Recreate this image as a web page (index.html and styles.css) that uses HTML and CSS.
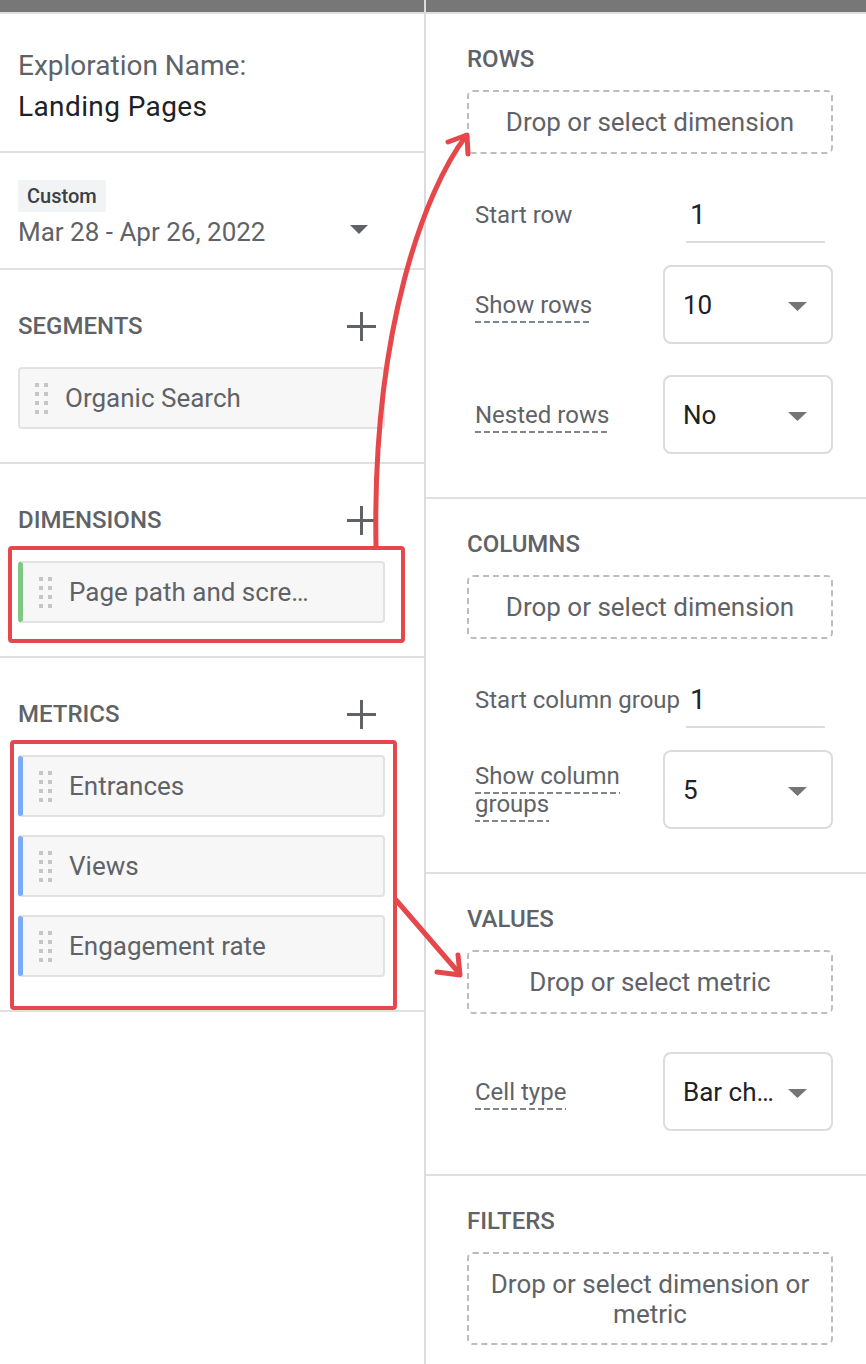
FILE: index.html
```html
<!DOCTYPE html>
<html lang="en">
<head>
<meta charset="utf-8">
<title>Exploration - Landing Pages</title>
<link rel="stylesheet" href="styles.css">
</head>
<body>
<div class="app">
  <aside class="panel left">
    <div class="topbar"></div>
    <section class="sec name">
      <div class="name-label">Exploration Name:</div>
      <div class="name-value">Landing Pages</div>
    </section>
    <section class="sec date">
      <span class="chip-custom">Custom</span>
      <div class="date-row">
        <span class="date-text">Mar 28 - Apr 26, 2022</span>
        <svg class="caret" width="18" height="9" viewBox="0 0 18 9"><path d="M0 0H18L9 9Z" fill="#5f6368"/></svg>
      </div>
    </section>
    <section class="sec list">
      <div class="sec-head">
        <h2>SEGMENTS</h2>
        <svg class="plus" width="29" height="29" viewBox="0 0 29 29"><path d="M14.5 0V29M0 14.5H29" stroke="#5f6368" stroke-width="3"/></svg>
      </div>
      <div class="chips">
        <div class="chip">
          <svg class="dots" width="13" height="31" viewBox="0 0 13 31"><g fill="#c6c6c6"><rect x="0" y="0" width="4" height="4"/><rect x="9" y="0" width="4" height="4"/><rect x="0" y="9" width="4" height="4"/><rect x="9" y="9" width="4" height="4"/><rect x="0" y="18" width="4" height="4"/><rect x="9" y="18" width="4" height="4"/><rect x="0" y="27" width="4" height="4"/><rect x="9" y="27" width="4" height="4"/></g></svg>
          <span class="chip-text">Organic Search</span>
        </div>
      </div>
    </section>
    <section class="sec list">
      <div class="sec-head">
        <h2>DIMENSIONS</h2>
        <svg class="plus" width="29" height="29" viewBox="0 0 29 29"><path d="M14.5 0V29M0 14.5H29" stroke="#5f6368" stroke-width="3"/></svg>
      </div>
      <div class="chips">
        <div class="chip dim">
          <svg class="dots" width="13" height="31" viewBox="0 0 13 31"><g fill="#c6c6c6"><rect x="0" y="0" width="4" height="4"/><rect x="9" y="0" width="4" height="4"/><rect x="0" y="9" width="4" height="4"/><rect x="9" y="9" width="4" height="4"/><rect x="0" y="18" width="4" height="4"/><rect x="9" y="18" width="4" height="4"/><rect x="0" y="27" width="4" height="4"/><rect x="9" y="27" width="4" height="4"/></g></svg>
          <span class="chip-text">Page path and scre…</span>
        </div>
      </div>
    </section>
    <section class="sec list">
      <div class="sec-head">
        <h2>METRICS</h2>
        <svg class="plus" width="29" height="29" viewBox="0 0 29 29"><path d="M14.5 0V29M0 14.5H29" stroke="#5f6368" stroke-width="3"/></svg>
      </div>
      <div class="chips">
        <div class="chip met">
          <svg class="dots" width="13" height="31" viewBox="0 0 13 31"><g fill="#c6c6c6"><rect x="0" y="0" width="4" height="4"/><rect x="9" y="0" width="4" height="4"/><rect x="0" y="9" width="4" height="4"/><rect x="9" y="9" width="4" height="4"/><rect x="0" y="18" width="4" height="4"/><rect x="9" y="18" width="4" height="4"/><rect x="0" y="27" width="4" height="4"/><rect x="9" y="27" width="4" height="4"/></g></svg>
          <span class="chip-text">Entrances</span>
        </div>
        <div class="chip met">
          <svg class="dots" width="13" height="31" viewBox="0 0 13 31"><g fill="#c6c6c6"><rect x="0" y="0" width="4" height="4"/><rect x="9" y="0" width="4" height="4"/><rect x="0" y="9" width="4" height="4"/><rect x="9" y="9" width="4" height="4"/><rect x="0" y="18" width="4" height="4"/><rect x="9" y="18" width="4" height="4"/><rect x="0" y="27" width="4" height="4"/><rect x="9" y="27" width="4" height="4"/></g></svg>
          <span class="chip-text">Views</span>
        </div>
        <div class="chip met">
          <svg class="dots" width="13" height="31" viewBox="0 0 13 31"><g fill="#c6c6c6"><rect x="0" y="0" width="4" height="4"/><rect x="9" y="0" width="4" height="4"/><rect x="0" y="9" width="4" height="4"/><rect x="9" y="9" width="4" height="4"/><rect x="0" y="18" width="4" height="4"/><rect x="9" y="18" width="4" height="4"/><rect x="0" y="27" width="4" height="4"/><rect x="9" y="27" width="4" height="4"/></g></svg>
          <span class="chip-text">Engagement rate</span>
        </div>
      </div>
    </section>
  </aside>

  <main class="panel right">
    <div class="topbar"></div>
    <section class="rsec">
      <h2>ROWS</h2>
      <div class="drop">Drop or select dimension</div>
      <div class="frow first">
        <span class="flabel">Start row</span>
        <div class="input">1</div>
      </div>
      <div class="frow sel">
        <span class="flabel"><span class="dash">Show rows</span></span>
        <div class="select"><span class="val">10</span><svg class="scaret" width="19" height="9" viewBox="0 0 19 9"><path d="M0 0H19L9.5 9Z" fill="#757575"/></svg></div>
      </div>
      <div class="frow sel sel2">
        <span class="flabel"><span class="dash">Nested rows</span></span>
        <div class="select"><span class="val">No</span><svg class="scaret" width="19" height="9" viewBox="0 0 19 9"><path d="M0 0H19L9.5 9Z" fill="#757575"/></svg></div>
      </div>
    </section>
    <section class="rsec">
      <h2>COLUMNS</h2>
      <div class="drop">Drop or select dimension</div>
      <div class="frow first">
        <span class="flabel nowrap">Start column group</span>
        <div class="input">1</div>
      </div>
      <div class="frow sel">
        <span class="flabel"><span class="dash">Show column groups</span></span>
        <div class="select"><span class="val">5</span><svg class="scaret" width="19" height="9" viewBox="0 0 19 9"><path d="M0 0H19L9.5 9Z" fill="#757575"/></svg></div>
      </div>
    </section>
    <section class="rsec">
      <h2>VALUES</h2>
      <div class="drop">Drop or select metric</div>
      <div class="frow sel sel-values">
        <span class="flabel"><span class="dash">Cell type</span></span>
        <div class="select"><span class="val">Bar ch…</span><svg class="scaret" width="19" height="9" viewBox="0 0 19 9"><path d="M0 0H19L9.5 9Z" fill="#757575"/></svg></div>
      </div>
    </section>
    <section class="rsec last">
      <h2>FILTERS</h2>
      <div class="drop tall">Drop or select dimension or metric</div>
    </section>
  </main>

  <svg class="annot" width="866" height="1364" viewBox="0 0 866 1364" fill="none" stroke="#e6474b" stroke-width="5" stroke-linecap="round" stroke-linejoin="round">
    <rect x="10" y="548" width="393" height="93" rx="2" stroke-width="4"/>
    <rect x="12" y="742" width="383" height="266" rx="2" stroke-width="4"/>
    <path d="M376 546 C372 330 425 190 466 136"/>
    <path d="M448 142 L467 135 L468 154"/>
    <path d="M396 900 L459 973"/>
    <path d="M437 972 L460 975 L458 955"/>
  </svg>
</div>
</body>
</html>
```

FILE: styles.css
```css
html, body {
  margin: 0;
  padding: 0;
  background: #ffffff;
}

.app {
  position: relative;
  display: flex;
  width: 866px;
  height: 1364px;
  overflow: hidden;
  font-family: Roboto, "Liberation Sans", Arial, sans-serif;
  color: #5f6368;
}

.panel {
  display: flex;
  flex-direction: column;
}

.left {
  flex: none;
  width: 424px;
  border-right: 2px solid #dadce0;
}

.right {
  flex: 1;
  min-width: 0;
}

.topbar {
  flex: none;
  height: 12px;
  background: #777777;
  border-bottom: 2px solid #e0e0e0;
}

h2 {
  margin: 0;
  font-size: 24px;
  line-height: 32px;
  font-weight: 500;
  color: #5f6368;
}

/* ---------- left panel ---------- */
.sec {
  border-bottom: 2px solid #e0e0e0;
}

.name {
  padding: 31px 18px 24px;
}

.name-label,
.name-value {
  font-size: 28px;
  line-height: 41px;
}

.name-label {
  color: #5f6368;
}

.name-value {
  color: #202124;
  letter-spacing: 0.4px;
}

.date {
  padding: 27px 56px 16px 18px;
}

.chip-custom {
  display: inline-block;
  height: 32px;
  line-height: 32px;
  padding: 0 9px;
  background: #f1f3f4;
  border-radius: 2px;
  font-size: 20px;
  font-weight: 500;
  color: #3c4043;
}

.date-row {
  display: flex;
  align-items: center;
  justify-content: space-between;
  height: 40px;
}

.date-text {
  font-size: 26px;
  color: #5f6368;
}

.caret {
  margin-top: -6px;
}

.list {
  padding: 40px 0 33px;
}

.sec-head {
  display: flex;
  align-items: center;
  justify-content: space-between;
  height: 32px;
  padding: 0 48px 0 18px;
}

.chips {
  display: flex;
  flex-direction: column;
  gap: 18px;
  margin-top: 25px;
  padding: 0 39px 0 18px;
}

.chip {
  display: flex;
  align-items: center;
  gap: 17px;
  height: 62px;
  box-sizing: border-box;
  padding-left: 15px;
  border: 2px solid #e2e2e2;
  border-radius: 4px;
  background: #f7f7f7;
}

.chip.dim {
  border-left: 5px solid #81c784;
  padding-left: 16px;
}

.chip.met {
  border-left: 5px solid #7baaf7;
  padding-left: 16px;
}

.dots {
  flex: none;
}

.chip-text {
  font-size: 26px;
  color: #5f6368;
  white-space: nowrap;
}

/* ---------- right panel ---------- */
.rsec {
  padding: 29px 33px 43px 41px;
  border-bottom: 2px solid #e0e0e0;
}

.rsec.last {
  border-bottom: none;
}

.drop {
  display: flex;
  align-items: center;
  justify-content: center;
  box-sizing: border-box;
  height: 64px;
  margin-top: 15px;
  padding: 0 20px;
  border: 2px dashed #bdbdbd;
  border-radius: 6px;
  font-size: 26px;
  line-height: 30px;
  color: #5f6368;
  text-align: center;
}

.drop.tall {
  height: 93px;
}

.frow {
  display: grid;
  grid-template-columns: minmax(0, 1fr) 170px;
  align-items: center;
}

.frow.first {
  margin-top: 33px;
}

.frow.sel {
  margin-top: 22px;
}

.frow.sel2 {
  margin-top: 31px;
}

.frow.sel-values {
  margin-top: 38px;
}

.flabel {
  padding-left: 8px;
  font-size: 24px;
  line-height: 28px;
  color: #5f6368;
}

.flabel.nowrap {
  white-space: nowrap;
}

.dash {
  padding-bottom: 4px;
  background-image: linear-gradient(90deg, #80868b 0 6px, transparent 6px 9px);
  background-size: 9px 2px;
  background-repeat: repeat-x;
  background-position: 0 100%;
}

.input {
  display: flex;
  align-items: center;
  box-sizing: border-box;
  height: 56px;
  margin: 0 8px 0 23px;
  padding-left: 4px;
  border-bottom: 2px solid #dadce0;
  font-size: 28px;
  color: #202124;
}

.select {
  display: flex;
  align-items: center;
  box-sizing: border-box;
  height: 79px;
  padding: 0 24px 0 18px;
  border: 2px solid #dadce0;
  border-radius: 8px;
}

.val {
  flex: 1;
  min-width: 0;
  overflow: hidden;
  white-space: nowrap;
  font-size: 26px;
  color: #202124;
}

.scaret {
  flex: none;
  margin-left: 10px;
  margin-top: 3px;
}

/* ---------- annotation overlay ---------- */
.annot {
  position: absolute;
  left: 0;
  top: 0;
  pointer-events: none;
}
```
